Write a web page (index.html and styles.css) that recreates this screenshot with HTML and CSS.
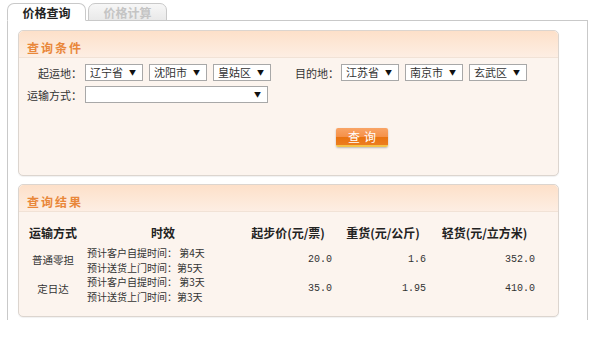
FILE: index.html
```html
<!DOCTYPE html>
<html lang="zh-CN">
  <head>
    <meta charset="UTF-8" />
    <title>价格查询</title>
    <link rel="stylesheet" href="styles.css">
  </head>
  <body>
    <div class="page">
      <div class="tabs">
        <div class="tab active">价格查询</div>
        <div class="tab">价格计算</div>
      </div>

      <div class="box">
        <div class="panel">
          <div class="panel-head">查询条件</div>
          <div class="panel-body query">
            <div class="form-row">
              <span class="lbl">起运地：</span>
              <span class="sel">辽宁省</span>
              <span class="sel">沈阳市</span>
              <span class="sel">皇姑区</span>
              <span class="lbl lbl-to">目的地：</span>
              <span class="sel">江苏省</span>
              <span class="sel">南京市</span>
              <span class="sel">玄武区</span>
            </div>
            <div class="form-row">
              <span class="lbl">运输方式：</span>
              <span class="sel sel-wide"></span>
            </div>
            <button class="btn">查询</button>
          </div>
        </div>

        <div class="panel">
          <div class="panel-head">查询结果</div>
          <div class="panel-body result">
            <div class="grid">
              <div class="th">运输方式</div>
              <div class="th">时效</div>
              <div class="th">起步价(元/票)</div>
              <div class="th">重货(元/公斤)</div>
              <div class="th">轻货(元/立方米)</div>

              <div class="td name">普通零担</div>
              <div class="td time">
                <div>预计客户自提时间：&nbsp;第4天</div>
                <div>预计送货上门时间：第5天</div>
              </div>
              <div class="td num">20.0</div>
              <div class="td num">1.6</div>
              <div class="td num">352.0</div>

              <div class="td name">定日达</div>
              <div class="td time">
                <div>预计客户自提时间：&nbsp;第3天</div>
                <div>预计送货上门时间：第3天</div>
              </div>
              <div class="td num">35.0</div>
              <div class="td num">1.95</div>
              <div class="td num">410.0</div>
            </div>
          </div>
        </div>
      </div>
    </div>
  </body>
</html>
```

FILE: styles.css
```css
* {
  box-sizing: border-box;
}

body {
  margin: 0;
  font-family: "Noto Sans CJK SC", "Liberation Sans", sans-serif;
  font-size: 11px;
  color: #333;
  background: #fff;
}

.page {
  padding: 3px 0 0 7px;
  width: 588px;
}

/* tabs */
.tabs {
  display: flex;
  gap: 2px;
  position: relative;
  z-index: 1;
  margin-bottom: -1px;
}

.tab {
  width: 79px;
  height: 18px;
  line-height: 17px;
  text-align: center;
  font-size: 12px;
  font-weight: bold;
  color: #c4c4c4;
  border: 1px solid #c9c9c9;
  border-radius: 7px 7px 0 0;
  background: linear-gradient(#f7f7f7, #e9e9e9);
}

.tab.active {
  color: #222;
  background: #fff;
  border-bottom-color: #fff;
}

.box {
  width: 581px;
  height: 300px;
  border: 1px solid #c9c9c9;
  border-bottom: none;
  padding: 9px 28px 0 10px;
}

/* panels */
.panel {
  border: 1px solid #dcd5cf;
  border-radius: 5px;
  background: #fcf4ee;
  box-shadow: 0 1px 1px rgba(0, 0, 0, 0.06);
  margin-bottom: 8px;
}

.panel-head {
  height: 27px;
  line-height: 19px;
  padding: 7px 0 0 8px;
  font-size: 12px;
  font-weight: bold;
  letter-spacing: 2px;
  color: #e9873a;
  background: linear-gradient(#fde0c9, #fdeee3);
  border-bottom: 1px solid #f1e2d6;
  border-radius: 5px 5px 0 0;
}

.query {
  padding: 6px 0 28px 6px;
}

.form-row {
  display: flex;
  align-items: center;
  height: 17px;
  margin-bottom: 5px;
}

.lbl {
  width: 57px;
  margin-right: 3px;
  text-align: right;
  white-space: nowrap;
}

.lbl-to {
  width: 62px;
  margin-right: 2px;
}

.sel {
  position: relative;
  width: 58px;
  height: 17px;
  line-height: 15px;
  margin-right: 6px;
  padding-left: 4px;
  background: #fff;
  border: 1px solid #a8a8a8;
}

.sel::after {
  content: "▼";
  position: absolute;
  right: 6px;
  top: 0;
  font-size: 7px;
  color: #111;
}

.sel-wide {
  width: 183px;
}

.btn {
  display: block;
  width: 52px;
  height: 19px;
  margin: 25px 0 0 311px;
  padding: 0;
  border: none;
  border-bottom: 2px solid #f4c24a;
  border-radius: 2px;
  font-family: inherit;
  font-size: 12px;
  letter-spacing: 4px;
  text-indent: 4px;
  color: #fff;
  background: linear-gradient(#f9a466 0%, #f59149 50%, #e9720f 52%, #ec7d1f 100%);
  box-shadow: 0 1px 2px rgba(0, 0, 0, 0.25);
}

/* result table */
.result {
  padding: 11px 0 12px 1px;
}

.grid {
  display: grid;
  grid-template-columns: 66px 154px 96px 94px 109px;
}

.th {
  height: 20px;
  line-height: 20px;
  margin-bottom: 3px;
  text-align: center;
  font-size: 12px;
  font-weight: bold;
  color: #222;
  white-space: nowrap;
}

.td {
  height: 29px;
  line-height: 14.5px;
  display: flex;
  align-items: center;
}

.name {
  justify-content: center;
  font-size: 10.5px;
}

.time {
  flex-direction: column;
  align-items: flex-start;
  justify-content: center;
  padding-left: 1px;
  font-size: 10px;
  white-space: nowrap;
}

.num {
  justify-content: flex-end;
  padding-right: 4px;
  font-family: "Liberation Mono", monospace;
  font-size: 10px;
  color: #333;
}
```
